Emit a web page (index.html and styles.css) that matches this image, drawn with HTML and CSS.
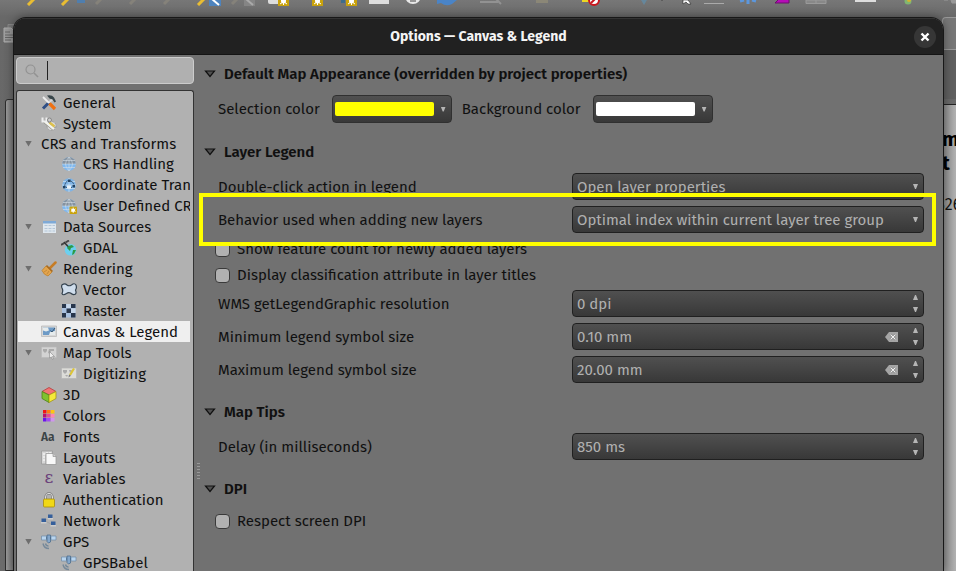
FILE: index.html
```html
<!DOCTYPE html>
<html lang="en">
<head>
    <meta charset="utf-8">
    <title>Options — Canvas &amp; Legend</title>
    <link rel="stylesheet" href="styles.css">
</head>
<body>
    <svg class="symbols" aria-hidden="true">
        <symbol id="i-general" viewBox="0 0 16 16">
            <path d="M2 13.500L8 7.500" stroke="#2f4f86" stroke-width="3"/>
            <path d="M8 7.500L12 3.500" stroke="#d8d8d8" stroke-width="2"/>
            <path d="M8.500 8.500L14 14" stroke="#f07010" stroke-width="3.200"/>
            <path d="M2 2L8 8" stroke="#eee" stroke-width="1.800"/>
            <path d="M6 .5q5-1 7 2l2 4-1.500 1-2-3-3-1z" fill="#38454a"/>
        </symbol>
        <symbol id="i-system" viewBox="0 0 16 16">
            <circle cx="10.500" cy="10" r="4.500" fill="#ddd" stroke="#999" stroke-dasharray="2 1"/>
            <path d="M3.500 5L13 13" stroke="#8a8a80" stroke-width="4"/>
            <path d="M4 5.500L13 13" stroke="#f3f3ee" stroke-width="2.800"/>
            <path d="M1.500 1.500v4h4v-4" fill="none" stroke="#eee" stroke-width="2"/>
            <path d="M8.500 6.500l5 4" stroke="#dcc04c" stroke-width="2.500"/>
            <circle cx="8.500" cy="4" r="2" fill="#ccc" stroke="#888"/>
        </symbol>
        <symbol id="i-globe" viewBox="0 0 16 16">
            <circle cx="8" cy="8" r="6.800" fill="#7fb8ef"/>
            <path d="M1.200 8a6.800 6.800 0 0 1 13.600 0z" fill="#85929f"/>
            <path d="M1 8h14M2 4.500h12M2 11.500h12M8 1v14M8 1q-7 7 0 14M8 1q7 7 0 14" fill="none" stroke="#d5dfe8" stroke-width=".6"/>
        </symbol>
        <symbol id="i-transform" viewBox="0 0 16 16">
            <circle cx="8" cy="8" r="6.800" fill="#7fb4e6"/>
            <path d="M1 8h14M2 4.500h12M2 11.500h12M8 1v14" fill="none" stroke="#cfe2f2" stroke-width=".7"/>
            <path d="M3.500 10Q4 4 8 3.500q4 .5 5 4M5 10.500h6" fill="none" stroke="#3b6288" stroke-width="1"/>
            <path d="M7 2.500h2.500V5H7zM2 9h2.500v2.500H2zM11.500 8H14v2.500h-2.500z" fill="#234363"/>
            <path d="M6 8.500h4v3H6z" fill="#e9f1f7"/>
        </symbol>
        <symbol id="i-userglobe" viewBox="0 0 16 16">
            <use href="#i-globe"/>
            <rect x="8.500" y="8.500" width="7.500" height="7.500" rx="1" fill="#c9a20c"/>
            <circle cx="12.200" cy="12.200" r="1.800" fill="#fff"/>
            <path d="M12.200 9.500v5.500M9.800 10.800l4.800 2.800M14.600 10.800l-4.800 2.800" stroke="#fff" stroke-width=".8"/>
        </symbol>
        <symbol id="i-table" viewBox="0 0 16 16">
            <path d="M2 2h13v12H2z" fill="#dfe7ee"/>
            <path d="M2 2h13v2.500H2z" fill="#7ea9d6"/>
            <path d="M3.500 6.500h3M7.500 6.500h3M11.500 6.500h2.500M3.500 9.500h3M7.500 9.500h3M11.500 9.500h2.500M3.500 12h3M7.500 12h3M11.500 12h2.500" stroke="#b4c6d8" stroke-width="1.200"/>
        </symbol>
        <symbol id="i-gdal" viewBox="0 0 16 16">
            <circle cx="9.500" cy="9.800" r="5.800" fill="#6cd0f0"/>
            <path d="M7 6l4-1 2 2-3 1-1 3-3-3zM12 10l3 0-2 4-2 1z" fill="#2f9a47"/>
            <path d="M0 5L3.500 3M4.500 2.500L8 .5" stroke="#484848" stroke-width="2"/>
            <path d="M3 2l4 4.500" stroke="#333" stroke-width="1.500"/>
        </symbol>
        <symbol id="i-brush" viewBox="0 0 16 16">
            <path d="M9 7l5.500-5.500" stroke="#c67c25" stroke-width="2.500" stroke-linecap="round"/>
            <path d="M5 5l6 6-4 4q-4-1-6-5.500z" fill="#e3a44c" stroke="#bd802d" stroke-width=".8"/>
            <path d="M5.500 4.500l6 6" stroke="#a86b20" stroke-width="1.500"/>
            <path d="M3 11l3-2M6 13l2-3" stroke="#c68a3a"/>
        </symbol>
        <symbol id="i-vector" viewBox="0 0 16 16">
            <path d="M1.500 2.500Q4 1 6 3q2 1.500 4.500 0Q13.500.5 15 3q1 3-.5 5 1.500 4-1 4.500-2 .5-4-1.500-2-1-4 .5Q2 14 1 11.500 2.500 8.500 1 6 0 3.500 1.500 2.500z" fill="#cfddec" stroke="#33414e" stroke-width="1.200"/>
        </symbol>
        <symbol id="i-raster" viewBox="0 0 16 16">
            <path d="M1 1h13.500v13.500H1z" fill="#a9c1e0"/>
            <path d="M1 1h4v4H1zM10 1h4.500v4H10zM5.500 5.500H10V10H5.500zM1 10h4v4.500H1zM10 10h4.500v4.500H10z" fill="#28364c"/>
            <path d="M5.500 1H10v4H5.500zM10 5.500h4.500V10H10z" fill="#c6d6e9"/>
        </symbol>
        <symbol id="i-canvas" viewBox="0 0 16 16">
            <path d="M.5 2h15v10.500H.5z" fill="#d8d8d8" stroke="#b5b5b5" stroke-width=".7"/>
            <path d="M2 3.500h12v7.500H2z" fill="#6d9ac6"/>
            <path d="M2 3.500l5 0 1 3-3 1-3-1zM8 11l1-3 5-1v4z" fill="#e6ebec"/>
            <path d="M9.500 6.500L11 8l3-4" fill="none" stroke="#38556f"/>
        </symbol>
        <symbol id="i-maptools" viewBox="0 0 16 16">
            <path d="M.5 2h15v10.500H.5z" fill="#d3d3d3" stroke="#b9b9b9" stroke-width=".7"/>
            <path d="M2 4l4 0 0 2-2 2-2-2zM8 4l5 0 0 2-3 0-1 3-2-1z" fill="#aaa"/>
            <path d="M8.500 6.500l5 5-2 0 1 2.500-1 .5-1-2.500-2 1z" fill="#eee" stroke="#888" stroke-width=".6"/>
        </symbol>
        <symbol id="i-digitizing" viewBox="0 0 16 16">
            <path d="M.5 2h15v10.500H.5z" fill="#dcdcd8" stroke="#b5b5b5" stroke-width=".7"/>
            <path d="M2 4l4 0 0 2-2 2-2-2zM4 9l3 0-1 2zM8 4h3L9 7z" fill="#aaa"/>
            <path d="M9 9L13 2.500" stroke="#dcc437" stroke-width="2.200"/>
            <path d="M7.500 11.500l.5-3 2 1.200z" fill="#777"/>
        </symbol>
        <symbol id="i-3d" viewBox="0 0 16 16">
            <path d="M8 .5L15 4.500 8 8 1 4.500z" fill="#f17373" stroke="#b63b3b" stroke-width=".8"/>
            <path d="M1 4.500L8 8v7.500L1 11.500z" fill="#80c22f" stroke="#4e8118" stroke-width=".8"/>
            <path d="M15 4.500L8 8v7.500l7-4z" fill="#f4ea39" stroke="#a59817" stroke-width=".8"/>
        </symbol>
        <symbol id="i-colors" viewBox="0 0 16 16">
            <path d="M2 2h3.500v3.500H2z" fill="#f11616"/><path d="M6 2h3.500v3.500H6z" fill="#ff7b12"/><path d="M10 2h3.500v3.500H10z" fill="#ffc311"/>
            <path d="M2 6h3.500v3.500H2z" fill="#b8146e"/><path d="M6 6h3.500v3.500H6z" fill="#e94792"/><path d="M10 6h3.500v3.500H10z" fill="#ff86b2"/>
            <path d="M2 10h3.500v3.500H2z" fill="#6c12ef"/><path d="M6 10h3.500v3.500H6z" fill="#a44bf1"/><path d="M10 10h3.500v3.500H10z" fill="#cf95ed"/>
        </symbol>
        <symbol id="i-layouts" viewBox="0 0 16 16">
            <path d="M.5 1h11v4H5v9H.5z" fill="#d6d6d6" stroke="#999" stroke-width=".8"/>
            <path d="M2 4h2M2 7h2M2 10h2M6 2v2M9 2v2" stroke="#fff"/>
            <path d="M5 3.500h7l3 3v8H5z" fill="#f8f8f8" stroke="#999" stroke-width=".8"/>
            <path d="M12 3.500v3h3" fill="#ccc" stroke="#888" stroke-width=".6"/>
        </symbol>
        <symbol id="i-lock" viewBox="0 0 16 16">
            <path d="M4.500 8V5a3.500 3.700 0 0 1 7 0v3" fill="none" stroke="#777" stroke-width="2.200"/>
            <path d="M4.500 8V5a3.500 3.700 0 0 1 7 0v3" fill="none" stroke="#ddd" stroke-width="1"/>
            <rect x="2.500" y="7" width="11" height="8" rx="1" fill="#f1d816" stroke="#a88d0b" stroke-width=".8"/>
        </symbol>
        <symbol id="i-network" viewBox="0 0 16 16">
            <path d="M3 8l6-3M4 8l8 4" stroke="#999" stroke-width=".6"/>
            <path d="M7 1.500h4.500V5H7zM.5 5.500H5V9H.5zM10 8.500h4.500V12H10z" fill="#355f9b"/>
            <path d="M6.500 5h5.500v1.500H6.500zM0 9h5.500v1.500H0zM9.500 12H15v1.500H9.500z" fill="#ccc"/>
        </symbol>
        <symbol id="i-gps" viewBox="0 0 16 16">
            <path d="M.5 2h5v4h-5zM10 2h5v4h-5z" fill="#b9d5ef" stroke="#6d8ba8" stroke-width=".7"/>
            <path d="M5.500 4H10" stroke="#446688" stroke-width="2"/>
            <path d="M6 1h3.500v7L7.500 9 6 7.500z" fill="#84a7cb" stroke="#446688" stroke-width=".7"/>
            <path d="M2 9.500q1 5 6 5M4.500 9.500q.5 2.500 3 2.500" fill="none" stroke="#76899a" stroke-width="1.400"/>
        </symbol>
        <symbol id="i-fold" viewBox="0 0 12 8">
            <path d="M1.500 1h9L6 6.500z" fill="#505050" stroke="#111" stroke-width="1.200"/>
        </symbol>
        <symbol id="i-clear" viewBox="0 0 14 10">
            <path d="M0 5l4-5h9v10H4z" fill="#a5a5a5"/>
            <path d="M5.500 2.500l5 5M10.500 2.500l-5 5" stroke="#555" stroke-width="2"/>
            <path d="M5.500 2.500l5 5M10.500 2.500l-5 5" stroke="#f2f2f2" stroke-width="1.200"/>
        </symbol>
    </svg>

    <!-- main window, behind the dialog -->
    <div class="app" aria-hidden="true">
        <svg class="toolbar" width="956" height="6" viewBox="0 0 956 6">
            <g stroke="#e9bd32" stroke-width="3"><path d="M28 5l6-6M62 5l6-6M198 5l6-6"/></g>
            <g stroke="#85827a" stroke-width="3"><path d="M96 4l6-6M130 4l6-6M164 4l6-6M232 4l6-6"/></g>
            <path d="M77 0h8v3h-8z" fill="#4f7eae"/>
            <path d="M209 0h12v6h-12z" fill="#4d83bd"/><path d="M212-1l7 6" stroke="#fff" stroke-width="2"/>
            <path d="M244 0h11v6h-11z" fill="#858585"/><path d="M246-1l7 6" stroke="#aaa" stroke-width="2"/>
            <rect x="268" y="-4" width="12" height="8" rx="2" fill="#ddd"/>
            <g fill="#c9a20c"><path d="M278 0h11v6h-11zM312 0h11v6h-11zM346 0h11v6h-11z"/></g>
            <path d="M341 0h4v3h-4z" fill="#3e6d8c"/>
            <g fill="#fff"><circle cx="283.500" cy="1" r="2.500"/><circle cx="317.500" cy="1" r="2.500"/><circle cx="351.500" cy="1" r="2.500"/></g>
            <g stroke="#fff"><path d="M283.500 0v5M280 4l6-4M287 4l-6-4M317.500 0v5M314 4l6-4M321 4l-6-4M351.500 0v5M348 4l6-4M355 4l-6-4"/></g>
            <path d="M369 0h20v4h-20z" fill="#ddd"/>
            <circle cx="413" cy="-4" r="8" fill="#e8e8e8"/><path d="M410 1h6" stroke="#444"/>
            <path d="M437 4V0h20l-5 4q-6 3-11-1z" fill="#4a84c7"/>
            <path d="M480 2h18M495-2l6 6" stroke="#929292" stroke-width="2"/>
            <path d="M536 0h12v3h-12z" fill="#8b8777"/>
            <path d="M582 0h9v2h-9z" fill="#ecd724"/><circle cx="594" cy="0" r="5" fill="#fff" stroke="#c9171e" stroke-width="2"/><path d="M591 3l6-6" stroke="#c9171e" stroke-width="2"/>
            <path d="M641 0h6l-3 5z" fill="#66879c"/><circle cx="662" cy="0" r="1" fill="#555"/>
            <path d="M683 0l5 0 3 4-3 0-2-2-3 2z" fill="#fff" stroke="#222" stroke-width=".6"/>
            <path d="M704 3.500h20" stroke="#aaa"/>
            <path d="M740 1l4-1M748 0v4M752 0l4 1" stroke="#5c97dd" stroke-width="3"/>
            <path d="M775 3l4-4h10v4z" fill="#b60cb6" stroke="#68106b"/>
            <path d="M806 0h20v3.500h-20zM816 0v3" fill="#888" stroke="#9a9a9a"/>
            <path d="M855 1h21" stroke="#ddd" stroke-width="2"/>
            <circle cx="908" cy="1" r="3.500" fill="#81b671"/><circle cx="909" cy="0" r="2" fill="#d6b32f"/>
            <path d="M944 0h4M951 0h5v3h-4z" fill="#999" stroke="#999"/>
        </svg>
        <svg class="paste" width="14" height="19" viewBox="0 0 14 19">
            <path d="M5 .5h9v14H5z" fill="#777" stroke="#888"/>
            <path d="M1 4h7l4 4v10H1z" fill="#999" stroke="#aaa"/>
            <path d="M2 8h5M2 11h8M2 13.500h8M2 16h6" stroke="#666"/>
        </svg>
        <div class="left-panel"></div>
        <div class="right-dock"><div class="dock-bar"></div></div>
        <div class="right-panel"><b>m</b><b>t</b><span>326</span></div>
    </div>

    <div class="dialog" role="dialog" aria-labelledby="dialog-title">
        <header class="titlebar">
            <h1 id="dialog-title">Options — Canvas &amp; Legend</h1>
            <button class="close" type="button" aria-label="Close"><svg width="10" height="10" viewBox="0 0 10 10"><path d="M1.500 1.500l7 7M8.500 1.500l-7 7" stroke="#fff" stroke-width="2.400"/></svg></button>
        </header>
        <div class="content">
            <nav class="sidebar">
                <div class="search">
                    <svg width="14" height="14" viewBox="0 0 14 14"><circle cx="5.500" cy="5.500" r="4.500" fill="none" stroke="#929292" stroke-width="1.200"/><path d="M9 9l4 4" stroke="#929292" stroke-width="1.600"/></svg>
                    <span class="caret"></span>
                    <input type="text" aria-label="Search options">
                </div>
                <ul class="tree">
                    <li><a href="#"><svg><use href="#i-general"/></svg>General</a></li>
                    <li><a href="#"><svg><use href="#i-system"/></svg>System</a></li>
                    <li class="open"><a class="no-icon" href="#">CRS and Transforms</a>
                        <ul>
                            <li><a href="#"><svg><use href="#i-globe"/></svg>CRS Handling</a></li>
                            <li><a href="#"><svg><use href="#i-transform"/></svg>Coordinate Transforms</a></li>
                            <li><a href="#"><svg><use href="#i-userglobe"/></svg>User Defined CRS</a></li>
                        </ul>
                    </li>
                    <li class="open"><a href="#"><svg><use href="#i-table"/></svg>Data Sources</a>
                        <ul>
                            <li><a href="#"><svg><use href="#i-gdal"/></svg>GDAL</a></li>
                        </ul>
                    </li>
                    <li class="open"><a href="#"><svg><use href="#i-brush"/></svg>Rendering</a>
                        <ul>
                            <li><a href="#"><svg><use href="#i-vector"/></svg>Vector</a></li>
                            <li><a href="#"><svg><use href="#i-raster"/></svg>Raster</a></li>
                        </ul>
                    </li>
                    <li><a class="selected" href="#"><svg><use href="#i-canvas"/></svg>Canvas &amp; Legend</a></li>
                    <li class="open"><a href="#"><svg><use href="#i-maptools"/></svg>Map Tools</a>
                        <ul>
                            <li><a href="#"><svg><use href="#i-digitizing"/></svg>Digitizing</a></li>
                        </ul>
                    </li>
                    <li><a href="#"><svg><use href="#i-3d"/></svg>3D</a></li>
                    <li><a href="#"><svg><use href="#i-colors"/></svg>Colors</a></li>
                    <li><a href="#"><span class="glyph">Aa</span>Fonts</a></li>
                    <li><a href="#"><svg><use href="#i-layouts"/></svg>Layouts</a></li>
                    <li><a href="#"><span class="glyph epsilon">ε</span>Variables</a></li>
                    <li><a href="#"><svg><use href="#i-lock"/></svg>Authentication</a></li>
                    <li><a href="#"><svg><use href="#i-network"/></svg>Network</a></li>
                    <li class="open"><a href="#"><svg><use href="#i-gps"/></svg>GPS</a>
                        <ul>
                            <li><a href="#"><svg><use href="#i-gps"/></svg>GPSBabel</a></li>
                        </ul>
                    </li>
                </ul>
            </nav>
            <div class="splitter"></div>
            <main class="page">
                <section>
                    <h2><svg><use href="#i-fold"/></svg>Default Map Appearance (overridden by project properties)</h2>
                    <div class="colors">
                        <label for="selection-color">Selection color</label>
                        <button class="color" id="selection-color" type="button"><span class="swatch yellow"></span></button>
                        <label for="background-color">Background color</label>
                        <button class="color" id="background-color" type="button"><span class="swatch white"></span></button>
                    </div>
                </section>
                <section>
                    <h2><svg><use href="#i-fold"/></svg>Layer Legend</h2>
                    <div class="rows">
                        <div class="row">
                            <label for="double-click">Double-click action in legend</label>
                            <div class="field combo"><select id="double-click"><option>Open layer properties</option></select></div>
                        </div>
                        <div class="row highlight">
                            <label for="behavior">Behavior used when adding new layers</label>
                            <div class="field combo"><select id="behavior"><option>Optimal index within current layer tree group</option></select></div>
                        </div>
                    </div>
                    <div class="checks">
                        <label><input type="checkbox">Show feature count for newly added layers</label>
                        <label><input type="checkbox">Display classification attribute in layer titles</label>
                    </div>
                    <div class="rows">
                        <div class="row">
                            <label for="resolution">WMS getLegendGraphic resolution</label>
                            <div class="field"><input id="resolution" type="text" value="0 dpi"><span class="steps"><button type="button" aria-label="Up"></button><button type="button" aria-label="Down"></button></span></div>
                        </div>
                        <div class="row">
                            <label for="min-size">Minimum legend symbol size</label>
                            <div class="field"><input id="min-size" type="text" value="0.10 mm"><button class="clear" type="button" aria-label="Clear"><svg><use href="#i-clear"/></svg></button><span class="steps"><button type="button" aria-label="Up"></button><button type="button" aria-label="Down"></button></span></div>
                        </div>
                        <div class="row">
                            <label for="max-size">Maximum legend symbol size</label>
                            <div class="field"><input id="max-size" type="text" value="20.00 mm"><button class="clear" type="button" aria-label="Clear"><svg><use href="#i-clear"/></svg></button><span class="steps"><button type="button" aria-label="Up"></button><button type="button" aria-label="Down"></button></span></div>
                        </div>
                    </div>
                </section>
                <section>
                    <h2><svg><use href="#i-fold"/></svg>Map Tips</h2>
                    <div class="rows">
                        <div class="row">
                            <label for="delay">Delay (in milliseconds)</label>
                            <div class="field"><input id="delay" type="text" value="850 ms"><span class="steps"><button type="button" aria-label="Up"></button><button type="button" aria-label="Down"></button></span></div>
                        </div>
                    </div>
                </section>
                <section>
                    <h2><svg><use href="#i-fold"/></svg>DPI</h2>
                    <div class="checks">
                        <label><input type="checkbox">Respect screen DPI</label>
                    </div>
                </section>
            </main>
        </div>
    </div>
</body>
</html>
```

FILE: styles.css
```css
* {
    box-sizing: border-box;
}
body {
    margin: 0;
    height: 100vh;
    overflow: hidden;
    position: relative;
    background: #727272;
    color: #101010;
    font-family: "Fira Sans", "Noto Sans", sans-serif;
    font-size: 15px;
    line-height: 20px;
}
button, input, select {
    font: inherit;
    color: inherit;
    margin: 0;
    padding: 0;
    border: none;
    background: none;
}
.symbols {
    position: absolute;
    width: 0;
    height: 0;
}

/* window behind the dialog */
.app {
    height: 100%;
    display: grid;
    grid-template-columns: 14px 1fr 14px;
    grid-template-rows: 17px 82px 1fr;
    background: linear-gradient(#777, #686868 17px, #6b6b6b);
}
.toolbar {
    grid-column: 1 / 4;
}
.paste {
    grid-area: 2 / 1;
    margin: 7px 0 0 3px;
}
.left-panel {
    grid-area: 3 / 1;
    margin-left: 5px;
    border: 1px solid #2c2c2c;
    border-radius: 3px 0 0 0;
    background: linear-gradient(90deg, #999, #777);
}
.right-dock {
    grid-area: 2 / 3;
    border: 1px solid #999;
    border-width: 1px 0 0 1px;
    border-radius: 4px 0 0 0;
    background: linear-gradient(#777 32px, #606060 32px);
}
.dock-bar {
    height: 32px;
    border-bottom: 1px solid #999;
}
.right-panel {
    grid-area: 3 / 3;
    display: flex;
    flex-direction: column;
    margin-top: 5px;
    padding-top: 22px;
    overflow: hidden;
    border-top: 1px solid #222;
    background: linear-gradient(90deg, #888, #b1b1b1);
}
.right-panel b {
    font-size: 20px;
    line-height: 24px;
    color: #000;
}
.right-panel span {
    margin-top: 20px;
    margin-left: -5px;
    font-size: 16px;
}

/* dialog */
.dialog {
    position: absolute;
    inset: 17px 12px 0 13px;
    display: flex;
    flex-direction: column;
    overflow: hidden;
    border: 1px solid #181818;
    border-bottom: none;
    border-radius: 13px 13px 0 0;
    background: #717171;
    box-shadow: 0 0 10px rgba(0, 0, 0, 0.4);
}
.titlebar {
    flex: none;
    display: flex;
    align-items: center;
    height: 37px;
    padding-left: 29px;
    padding-right: 7px;
    background: #212121;
    border-top: 1px solid #333;
    border-bottom: 1px solid #141414;
}
.titlebar h1 {
    flex: 1;
    margin: 0;
    text-align: center;
    color: #f4f4f4;
    font-size: 14px;
    font-weight: 700;
}
.close {
    display: grid;
    place-items: center;
    width: 22px;
    height: 22px;
    border-radius: 50%;
    background: #363636;
}
.content {
    flex: 1;
    min-height: 0;
    display: flex;
}
.sidebar {
    flex: none;
    width: 180px;
    padding: 2px 0 0 2px;
    display: flex;
    flex-direction: column;
    gap: 6px;
}
.search {
    flex: none;
    display: flex;
    align-items: center;
    height: 27px;
    padding-left: 8px;
    border: 1px solid #ccc;
    border-radius: 4px;
    background: #b0b0b0;
}
.caret {
    width: 1px;
    height: 19px;
    margin-left: 8px;
    background: #222;
}
.search input {
    flex: 1;
    min-width: 0;
    height: 100%;
    outline: none;
}
.tree {
    flex: 1;
    min-height: 0;
    overflow: hidden;
    margin: 0;
    padding: 1px 3px 0 1px;
    border: 1px solid #333;
    border-bottom: none;
    border-radius: 3px 3px 0 0;
    background: #b1b1b1;
    list-style: none;
}
.tree ul {
    margin: 0;
    padding: 0;
    list-style: none;
}
.tree a {
    display: flex;
    align-items: center;
    gap: 6px;
    height: 21px;
    padding-left: 23px;
    overflow: hidden;
    white-space: nowrap;
    color: inherit;
    text-decoration: none;
}
.tree ul a {
    padding-left: 43px;
}
.tree a.no-icon {
    height: 19px;
}
.tree a.selected {
    background: #efefef;
}
.tree svg, .glyph {
    flex: none;
    width: 16px;
    height: 16px;
}
.open > a::before {
    content: "";
    width: 7px;
    height: 6px;
    margin-left: -16px;
    margin-right: 3px;
    background: #6e6e6e;
    clip-path: polygon(0 0, 100% 0, 50% 100%);
}
.glyph {
    color: #3b4446;
    font-size: 12px;
    font-weight: 600;
    line-height: 16px;
}
.epsilon {
    color: #69407a;
    font-family: "DejaVu Serif", serif;
    font-size: 17px;
    font-weight: normal;
    line-height: 12px;
    text-align: center;
}
.splitter {
    flex: none;
    align-self: flex-start;
    width: 3px;
    height: 18px;
    margin: 408px 0 0 3px;
    background: repeating-linear-gradient(#999 0 1px, transparent 1px 3px);
}

/* settings page */
.page {
    flex: 1;
    min-width: 0;
    padding: 9px 19px 0 4px;
}
.page h2 {
    display: flex;
    align-items: center;
    gap: 8px;
    margin: 0;
    font-size: 15px;
    font-weight: 600;
    white-space: nowrap;
}
.page h2 svg {
    width: 12px;
    height: 8px;
}
section {
    margin-bottom: 19px;
}
.colors {
    display: flex;
    align-items: center;
    margin-top: 11px;
    padding-left: 14px;
}
.color {
    width: 120px;
    height: 28px;
    margin: 0 10px 0 12px;
    padding: 0 5px 0 2px;
    display: flex;
    align-items: center;
    justify-content: space-between;
    border: 1px solid #303030;
    border-radius: 4px;
    background: linear-gradient(#505050, #383838);
}
.swatch {
    width: 99px;
    height: 14px;
    border-radius: 2px;
}
.yellow {
    background: #ff0;
}
.white {
    background: #fff;
}
.color::after, .combo::after, .steps button {
    content: "";
    width: 5px;
    height: 5px;
    background: #b5b5b5;
    clip-path: polygon(0 0, 100% 0, 60% 100%, 40% 100%);
}
.rows {
    display: flex;
    flex-direction: column;
    gap: 6px;
    margin-top: 11px;
    padding-left: 14px;
}
.row {
    display: grid;
    grid-template-columns: 1fr 1fr;
    gap: 2px;
    align-items: center;
}
.highlight {
    position: relative;
}
/* yellow marker frame over the row */
.highlight::after {
    content: "";
    position: absolute;
    z-index: 1;
    inset: -13px -12px -13px -19px;
    border: 4px solid #ff0;
    pointer-events: none;
}
.field {
    display: flex;
    align-items: center;
    height: 27px;
    padding: 0 5px 0 4px;
    border: 1px solid #202020;
    border-radius: 4px;
    background: linear-gradient(#505050, #383838);
    color: #b0b0b0;
}
.field input, .field select {
    flex: 1;
    min-width: 0;
    height: 100%;
    appearance: none;
    outline: none;
}
.clear {
    display: flex;
    margin-right: 14px;
}
.clear svg {
    width: 14px;
    height: 10px;
}
.steps {
    display: flex;
    flex-direction: column;
    gap: 7px;
}
.steps button:first-child {
    clip-path: polygon(40% 0, 60% 0, 100% 100%, 0 100%);
}
.checks {
    display: flex;
    flex-direction: column;
    gap: 6px;
    margin: 12px 0 0 11px;
}
.checks label {
    display: flex;
    align-items: center;
    gap: 7px;
}
.checks input {
    appearance: none;
    width: 15px;
    height: 15px;
    border: 1px solid #3a3a3a;
    border-radius: 4px;
    background: #b1b1b1;
}
.rows + .checks {
    margin-top: 6px;
}
.checks + .rows {
    margin-top: 5px;
}
```
